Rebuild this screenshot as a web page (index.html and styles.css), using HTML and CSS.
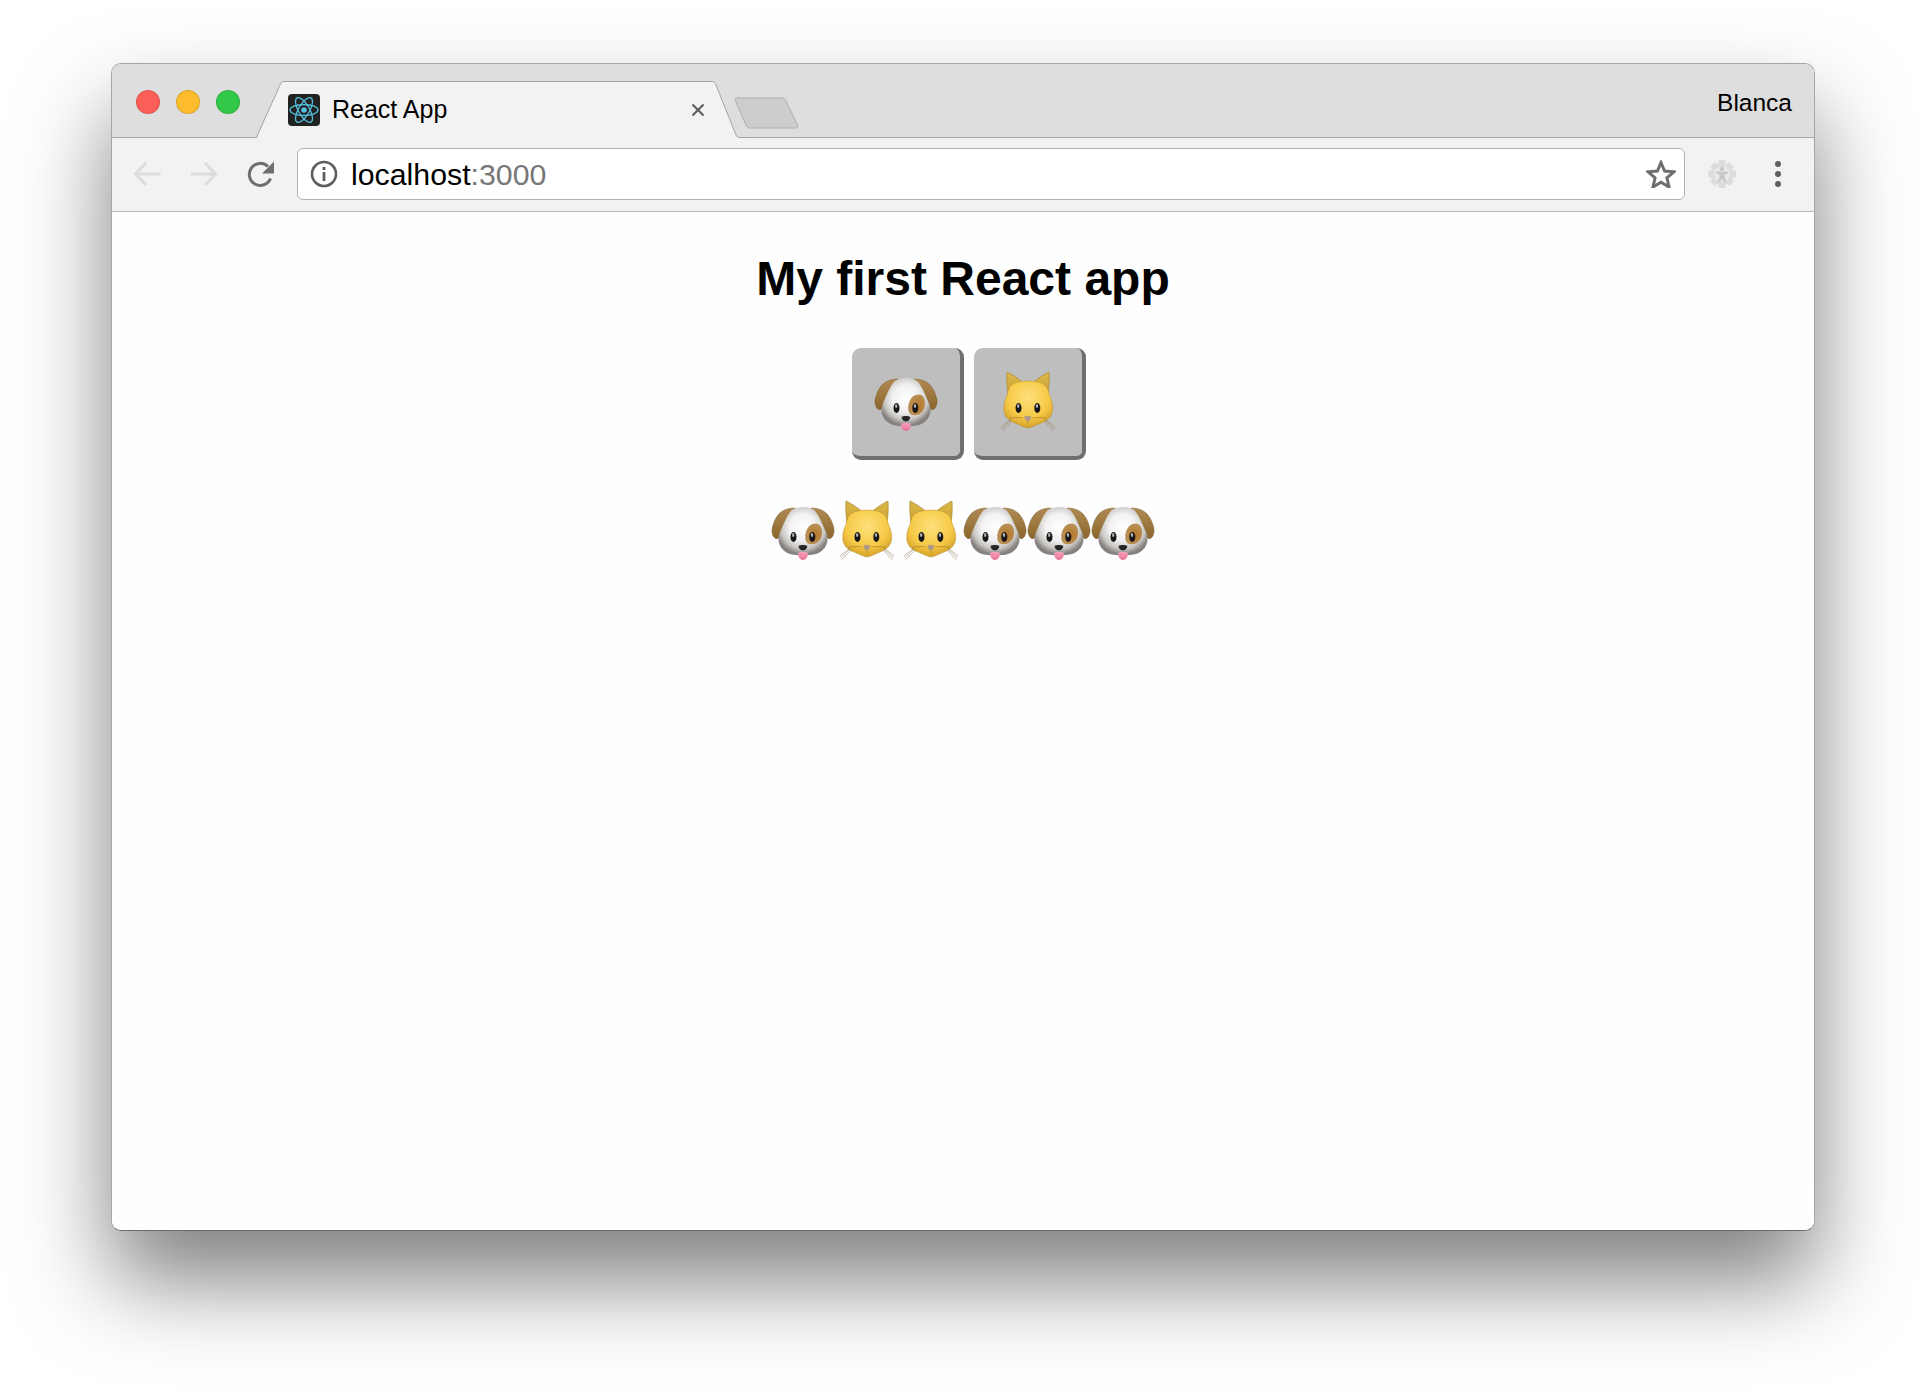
FILE: index.html
```html
<!DOCTYPE html>
<html>
<head>
  <title>React App</title>
  <link rel="stylesheet" href="styles.css">
</head>
<body>
  <svg class="defs" width="0" height="0">
    <defs>
      <radialGradient id="dogFace" cx="50%" cy="42%" r="56%">
        <stop offset="0" stop-color="#ffffff"/>
        <stop offset="0.5" stop-color="#f2f1f0"/>
        <stop offset="0.8" stop-color="#c9c7c4"/>
        <stop offset="1" stop-color="#858280"/>
      </radialGradient>
      <linearGradient id="dogEar" x1="0" y1="0" x2="0" y2="1">
        <stop offset="0" stop-color="#b08a52"/>
        <stop offset="1" stop-color="#8a662c"/>
      </linearGradient>
      <radialGradient id="dogPatch" cx="60%" cy="55%" r="60%">
        <stop offset="0" stop-color="#b9782a"/>
        <stop offset="1" stop-color="#b8935a"/>
      </radialGradient>
      <radialGradient id="catFace" cx="50%" cy="35%" r="65%">
        <stop offset="0" stop-color="#fde07c"/>
        <stop offset="0.65" stop-color="#f6ca47"/>
        <stop offset="1" stop-color="#d4a028"/>
      </radialGradient>
      <linearGradient id="catEar" x1="0" y1="0" x2="0" y2="1">
        <stop offset="0" stop-color="#dcb84a"/>
        <stop offset="1" stop-color="#c9a02f"/>
      </linearGradient>
      <linearGradient id="tongue" x1="0" y1="0" x2="0" y2="1">
        <stop offset="0" stop-color="#f6a2bb"/>
        <stop offset="1" stop-color="#ec6f97"/>
      </linearGradient>

      <symbol id="dog" viewBox="0 0 64 64">
        <path d="M24 9C13 9 7 14 3.500 22C2 26 0.500 30 1 33C1.500 37 4 40.500 6.500 39.500C9.500 37.500 10.500 33 11.500 30L19 16Z" fill="url(#dogEar)" stroke="#7e5f2e" stroke-width="0.5"/>
        <path d="M40 9C51 9 57 14 60.500 22C62 26 63.500 30 63 33C62.500 37 60 40.500 57.500 39.500C54.500 37.500 53.500 33 52.500 30L45 16Z" fill="url(#dogEar)" stroke="#7e5f2e" stroke-width="0.5"/>
        <path d="M32 8C38 8 42 9.500 45 13C48 17 51.500 25 54 31C55.500 34 56.500 37 56.500 40C56.500 49 49 55.800 39 56C34 56.300 29 56.300 25 56C15 55.800 7.500 49 7.500 40C7.500 37 8.500 34 10 31C12.500 25 16 17 19 13C22 9.500 26 8 32 8Z" fill="url(#dogFace)"/>
        <path d="M44 24.500C48.500 24 51 28 51 33.500C51 41 46 45.500 40 45.300C36 45.200 34 42 34.200 37.500C34.500 31 38 25 44 24.500Z" fill="url(#dogPatch)"/>
        <ellipse cx="22.500" cy="38" rx="3" ry="5" fill="#17171a"/>
        <ellipse cx="41.300" cy="38" rx="3" ry="5" fill="#17171a"/>
        <ellipse cx="22.200" cy="36" rx="1.200" ry="1.900" fill="#b0b0b0"/>
        <ellipse cx="41" cy="36" rx="1.200" ry="1.900" fill="#b0b0b0"/>
        <path d="M27.800 46.800C29.500 45.800 34.500 45.800 36 46.800C36.800 48.500 34.500 51.500 31.900 51.500C29.300 51.500 27 48.500 27.800 46.800Z" fill="#26262a"/>
        <path d="M27.500 53.500C29.500 52.700 34.500 52.700 36.500 53.500C37.500 57 35.500 61 32 61C28.500 61 26.500 57 27.500 53.500Z" fill="url(#tongue)"/>
      </symbol>

      <symbol id="cat" viewBox="0 0 64 64">
        <path d="M11 2C15 4 22 8 27 12.500L12 25C11 17 10.500 8 11 2Z" fill="url(#catEar)" stroke="#a98a2e" stroke-width="0.7"/>
        <path d="M53 2C49 4 42 8 37 12.500L52 25C53 17 53.500 8 53 2Z" fill="url(#catEar)" stroke="#a98a2e" stroke-width="0.7"/>
        <path d="M32 11C38 11 44 12 48 14.500C51 17 52.500 20 53 24C55 29 56.700 33 56.700 38.500C56.700 46 52 50.500 45 53C40 54.800 36 57.700 32 58C28 57.700 24 54.800 19 53C12 50.500 7.700 46 7.700 38.500C7.700 33 9.500 29 11.500 24C12 20 13 17 16 14.500C20 12 26 11 32 11Z" fill="url(#catFace)" stroke="#b8923a" stroke-width="0.5"/>
        <ellipse cx="22.500" cy="38" rx="3" ry="5" fill="#17171a"/>
        <ellipse cx="41.300" cy="38" rx="3" ry="5" fill="#17171a"/>
        <ellipse cx="22.200" cy="36" rx="1.200" ry="1.900" fill="#b0b0b0"/>
        <ellipse cx="41" cy="36" rx="1.200" ry="1.900" fill="#b0b0b0"/>
        <path d="M28.300 46.500C30 45.500 33.500 45.500 35.300 46.500C35.700 48.500 33.500 51.500 31.800 51.500C30 51.500 28 48.500 28.300 46.500Z" fill="#b39a83"/>
        <path d="M31.800 51.500V54M27 48C22 47 17 47.500 13 48.500M36.500 48C41.500 47 46.500 47.500 50.500 48.500" fill="none" stroke="#a07c2a" stroke-width="0.6"/>
        <g fill="none" stroke="#8f7f58" stroke-width="0.5">
          <path d="M15 49L5 57"/>
          <path d="M15 50L5.500 59"/>
          <path d="M16 51L6.500 61"/>
          <path d="M49 49L59 57"/>
          <path d="M49 50L58.500 59"/>
          <path d="M48 51L57.500 61"/>
        </g>
      </symbol>
    </defs>
  </svg>

  <div class="window">
    <div class="tabstrip">
      <div class="lights">
        <span class="light red"></span>
        <span class="light yellow"></span>
        <span class="light green"></span>
      </div>
      <div class="tab">
        <svg class="tab-shape" width="490" height="57" viewBox="0 0 490 57">
          <path d="M0 56.500C0.500 56.500 1 55.500 1.500 54L24 4C25 1.500 26 0.500 28 0.500H456C458 0.500 459 1.500 460 4L480 54C480.500 55.500 481.500 56.500 484 56.500H490" fill="#f2f2f2" stroke="#a3a3a3"/>
          <rect x="2" y="56" width="480" height="1" fill="#f2f2f2"/>
        </svg>
        <svg class="favicon" width="32" height="32" viewBox="0 0 32 32">
          <rect width="32" height="32" rx="4" fill="#222222"/>
          <g fill="none" stroke="#53c1de" stroke-width="1.300">
            <ellipse cx="16" cy="16" rx="14" ry="5.500"/>
            <ellipse cx="16" cy="16" rx="14" ry="5.500" transform="rotate(60 16 16)"/>
            <ellipse cx="16" cy="16" rx="14" ry="5.500" transform="rotate(120 16 16)"/>
          </g>
          <circle cx="16" cy="16" r="2.800" fill="#53c1de"/>
        </svg>
        <span class="tab-title">React App</span>
        <svg class="tab-close" width="14" height="14" viewBox="0 0 14 14">
          <path d="M1.500 1.500L12.500 12.500M12.500 1.500L1.500 12.500" stroke="#5a5a5a" stroke-width="2" fill="none"/>
        </svg>
      </div>
      <svg class="newtab" width="65" height="32" viewBox="0 0 65 32">
        <path d="M3 1H48C50 1 51 2 52 4L63.500 28C64.500 30 63.500 31 62 31H16C14 31 13 30 12 28L1.500 4C0.500 2 1 1 3 1Z" fill="#cdcdcd" stroke="#aeaeae"/>
      </svg>
      <span class="profile">Blanca</span>
    </div>

    <div class="toolbar">
      <svg class="nav" width="28" height="26" viewBox="0 0 28 26">
        <path d="M27.500 13H3M13 2L2.500 13L13 24" fill="none" stroke="#dcdcdc" stroke-width="3"/>
      </svg>
      <svg class="nav" width="28" height="26" viewBox="0 0 28 26">
        <path d="M1 13H25M15 2L25.500 13L15 24" fill="none" stroke="#dcdcdc" stroke-width="3"/>
      </svg>
      <svg class="nav" width="28" height="26" viewBox="0 0 28 26">
        <path d="M23.500 17.500A11 11 0 1 1 21 5.500" fill="none" stroke="#6e6e6e" stroke-width="3"/>
        <path d="M27 0.500V12.500H15Z" fill="#6e6e6e"/>
      </svg>
      <div class="omnibox">
        <svg width="28" height="28" viewBox="0 0 28 28">
          <circle cx="14" cy="14" r="12" fill="none" stroke="#5f5f5f" stroke-width="2.600"/>
          <rect x="12.600" y="7" width="2.800" height="3" fill="#5f5f5f"/>
          <rect x="12.600" y="12" width="2.800" height="9" fill="#5f5f5f"/>
        </svg>
        <span class="url">localhost<span class="port">:3000</span></span>
        <svg class="star" width="30" height="28" viewBox="0 0 30 28">
          <path d="M15 2.500L18.600 11L28 11.800L20.900 17.900L23 27L15 22.200L7 27L9.100 17.900L2 11.800L11.400 11Z" fill="none" stroke="#6e6e6e" stroke-width="3"/>
        </svg>
      </div>
      <svg class="gear" width="28" height="28" viewBox="0 0 28 28">
        <path fill="#dcdcdc" d="M11 0H17L18 4.200L21.500 2.300L25.700 6.500L23.800 10L28 11V17L23.800 18L25.700 21.500L21.500 25.700L18 23.800L17 28H11L10 23.800L6.500 25.700L2.300 21.500L4.200 18L0 17V11L4.200 10L2.300 6.500L6.500 2.300L10 4.200Z"/>
        <circle cx="14" cy="14" r="8" fill="#e9e9e9"/>
        <circle cx="14" cy="8.800" r="2.200" fill="#c8c8c8"/>
        <path d="M8 11.500H20V13.500L16.500 14.500V17L18.500 22H16L14 18.500L12 22H9.500L11.500 17V14.500L8 13.500Z" fill="#c8c8c8"/>
      </svg>
      <div class="menu">
        <span></span>
        <span></span>
        <span></span>
      </div>
    </div>

    <div class="content">
      <h1>My first React app</h1>
      <div class="buttons">
        <button class="vote"><svg class="emoji" role="img" aria-label="dog"><use href="#dog"/></svg></button>
        <button class="vote"><svg class="emoji" role="img" aria-label="cat"><use href="#cat"/></svg></button>
      </div>
      <div class="votes">
        <svg class="emoji" role="img" aria-label="dog"><use href="#dog"/></svg>
        <svg class="emoji" role="img" aria-label="cat"><use href="#cat"/></svg>
        <svg class="emoji" role="img" aria-label="cat"><use href="#cat"/></svg>
        <svg class="emoji" role="img" aria-label="dog"><use href="#dog"/></svg>
        <svg class="emoji" role="img" aria-label="dog"><use href="#dog"/></svg>
        <svg class="emoji" role="img" aria-label="dog"><use href="#dog"/></svg>
      </div>
    </div>
  </div>
</body>
</html>
```

FILE: styles.css
```css
html, body {
  margin: 0;
  padding: 0;
  background: #fff;
  overflow: hidden;
}
body {
  height: 1390px;
  padding-top: 63px;
  box-sizing: border-box;
  font-family: "Liberation Sans", Arial, sans-serif;
}
.defs {
  position: absolute;
}
.window {
  width: 1704px;
  height: 1168px;
  margin-left: 111px;
  box-sizing: border-box;
  border: 1px solid #a6a6a6;
  border-bottom-color: #6b6b6b;
  border-radius: 10px;
  background: #fff;
  display: flex;
  flex-direction: column;
  overflow: hidden;
  box-shadow: 0 50px 90px rgba(0,0,0,0.5);
}
.tabstrip {
  height: 74px;
  flex: none;
  display: flex;
  align-items: flex-start;
  padding: 17px 22px 0 24px;
  box-sizing: border-box;
  background: #dedede;
  border-bottom: 1px solid #a8a8a8;
}
.lights {
  display: flex;
  gap: 16px;
  margin-top: 9px;
}
.light {
  width: 24px;
  height: 24px;
  box-sizing: border-box;
  border-radius: 50%;
  border: 1px solid rgba(0,0,0,0.12);
}
.red { background: #fc5f57; }
.yellow { background: #fdbc2e; }
.green { background: #33c748; }
.tab {
  position: relative;
  width: 483px;
  height: 57px;
  box-sizing: border-box;
  margin-left: 16px;
  padding: 13px 34px 0 32px;
  display: flex;
  align-items: flex-start;
}
.tab-shape {
  position: absolute;
  left: 0;
  top: 0;
}
.favicon, .tab-title, .tab-close {
  position: relative;
}
.tab-title {
  margin: -1px 0 0 12px;
  font-size: 25px;
  line-height: 32px;
  color: #000;
}
.tab-close {
  margin-left: auto;
  margin-top: 9px;
}
.newtab {
  position: relative;
  margin: 16px 0 0 -5px;
  flex: none;
}
.profile {
  margin-left: auto;
  margin-top: 6px;
  font-size: 24.500px;
  line-height: 32px;
  color: #000;
}
.toolbar {
  height: 74px;
  flex: none;
  box-sizing: border-box;
  display: flex;
  align-items: center;
  padding: 0 0 1px 21px;
  background: #f2f2f2;
  border-bottom: 1px solid #b4b4b4;
}
.nav {
  margin-right: 29px;
  flex: none;
}
.nav:nth-child(3) {
  margin-right: 22px;
}
.omnibox {
  width: 1388px;
  height: 52px;
  box-sizing: border-box;
  display: flex;
  align-items: center;
  padding: 0 8px 0 12px;
  background: #fff;
  border: 1px solid #b3b3b3;
  border-radius: 6px;
}
.url {
  margin: 2px 0 0 13px;
  font-size: 30.300px;
  color: #000;
}
.port {
  color: #777;
}
.star {
  margin-left: auto;
}
.gear {
  margin-left: 23px;
  flex: none;
}
.menu {
  margin-left: 39px;
  display: flex;
  flex-direction: column;
  gap: 4px;
}
.menu span {
  width: 6px;
  height: 6px;
  border-radius: 50%;
  background: #5f5f5f;
}
.content {
  flex: 1;
  padding-top: 39px;
  background: #fefefe;
  text-align: center;
}
h1 {
  margin: 0 0 41px;
  font-size: 48px;
  line-height: 56px;
  font-weight: bold;
  color: #000;
}
.buttons {
  display: flex;
  justify-content: center;
  gap: 10px;
  padding-left: 12px;
}
.vote {
  width: 112px;
  height: 112px;
  padding: 0;
  display: flex;
  align-items: center;
  justify-content: center;
  box-sizing: border-box;
  background: #bebebe;
  border: 0 solid #6f6f6f;
  border-right-width: 4px;
  border-bottom-width: 4px;
  border-radius: 9px;
}
.emoji {
  width: 64px;
  height: 64px;
  flex: none;
  display: block;
}
.votes {
  display: flex;
  justify-content: center;
  margin-top: 39px;
}
```
